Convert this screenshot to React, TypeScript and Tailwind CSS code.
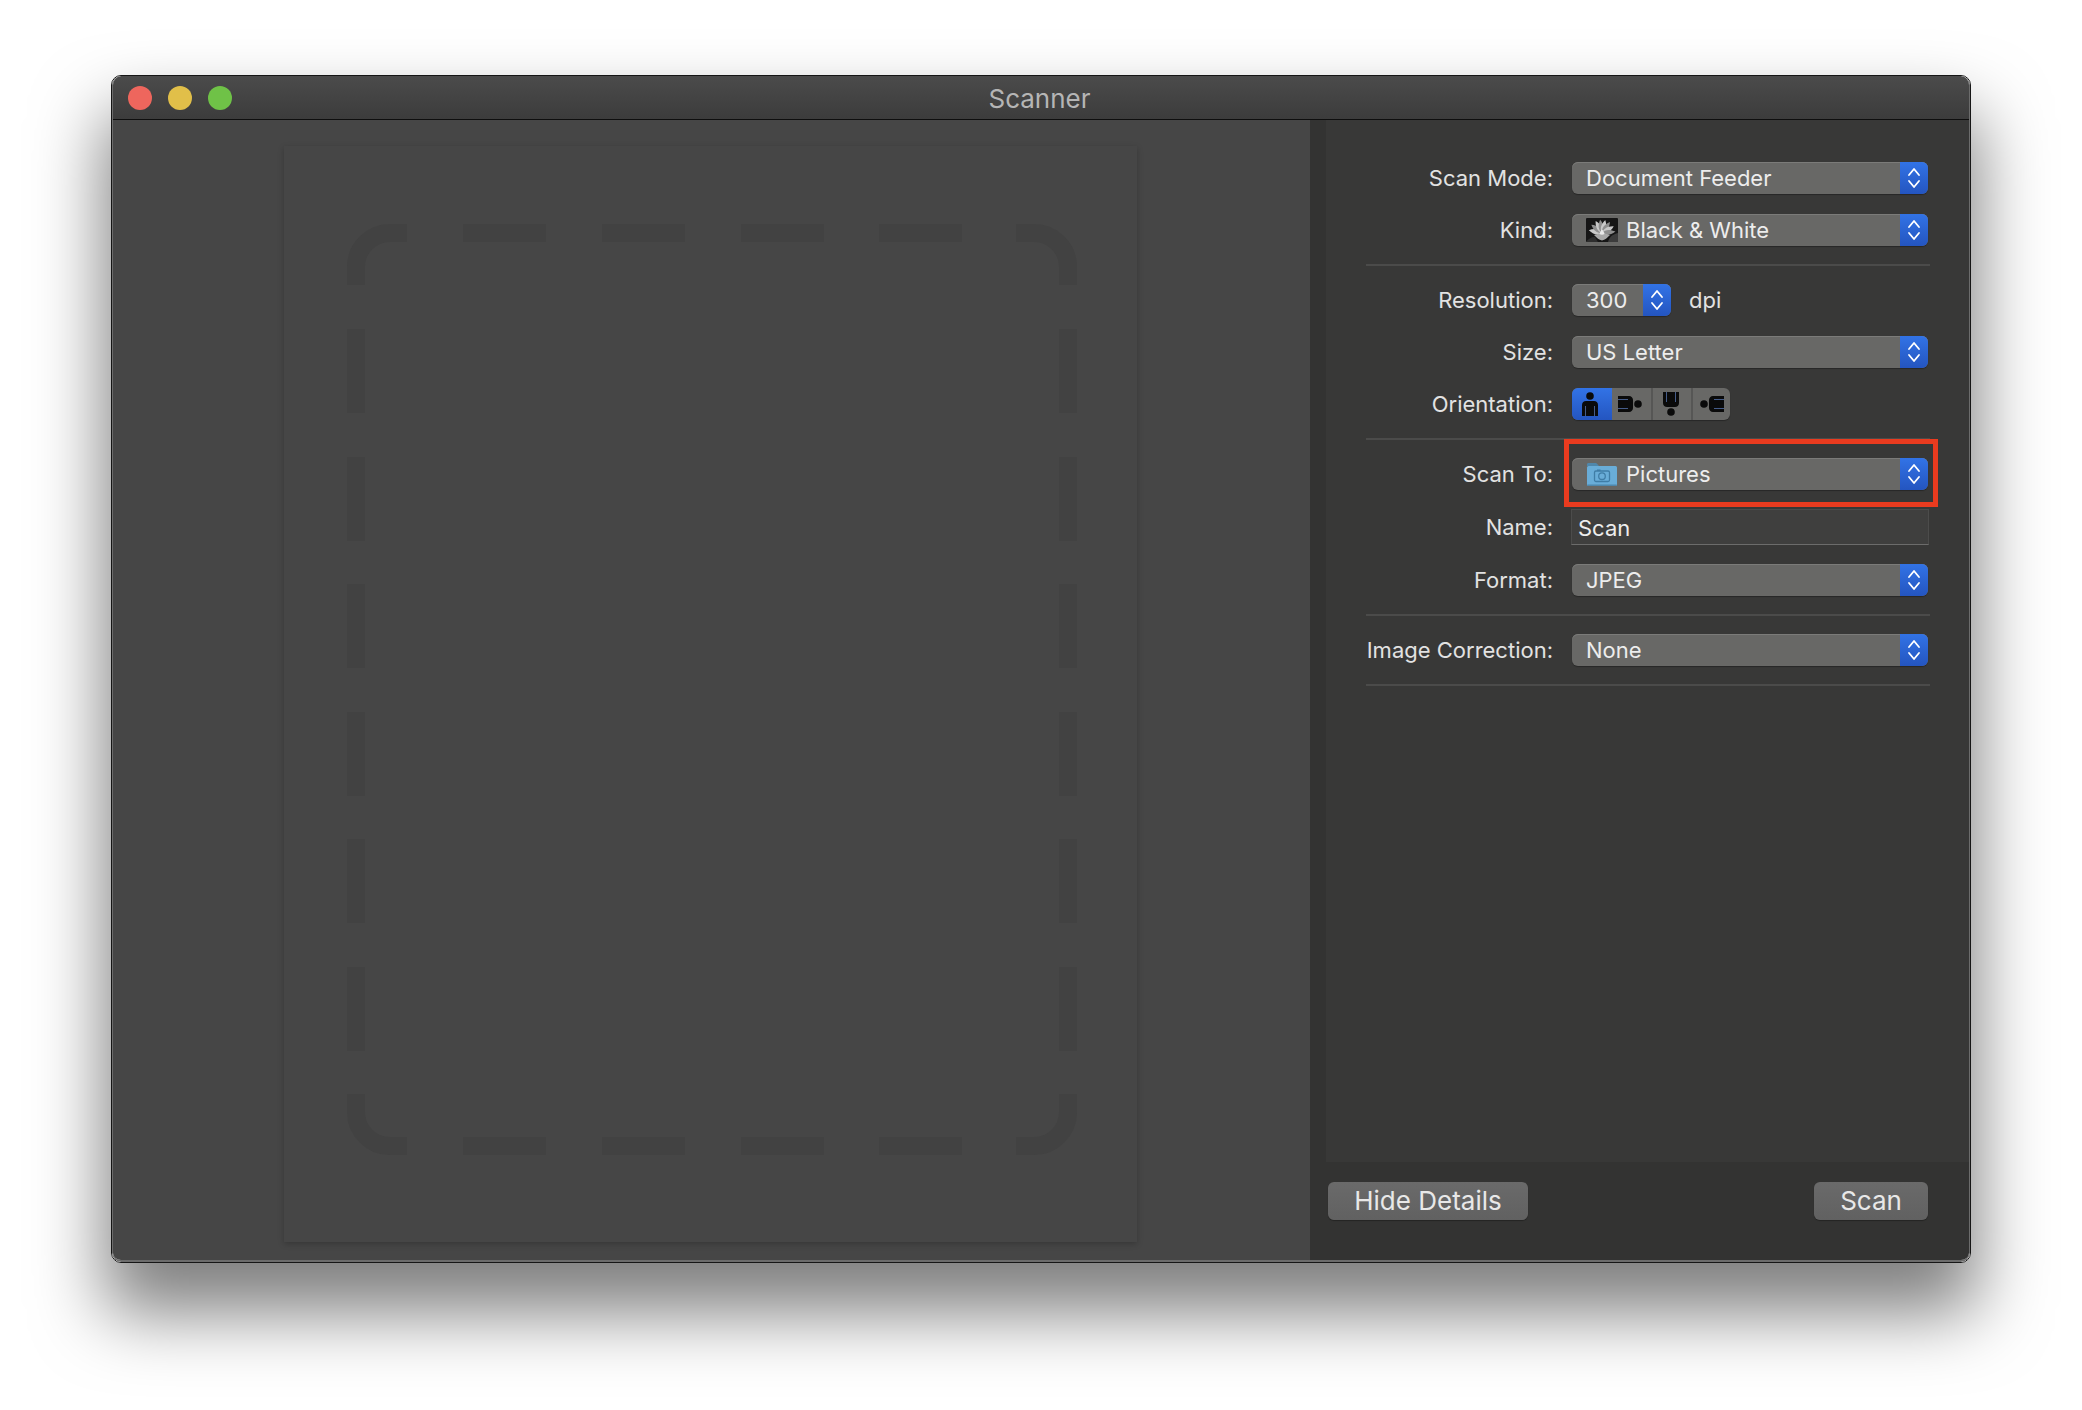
import type { ReactNode } from "react";

function Chevrons() {
  return (
    <svg width="14" height="24" viewBox="0 0 14 24" fill="none" stroke="#fff" strokeWidth="1.8" strokeLinecap="round" strokeLinejoin="round">
      <path d="M2 9 7 3l5 6" />
      <path d="M2 15l5 6 5-6" />
    </svg>
  );
}

function FlowerIcon() {
  const petals = [-78, -52, -28, -8, 14, 36, 60, 84];
  return (
    <svg width="32" height="24" viewBox="0 0 32 24" className="shrink-0">
      <rect width="32" height="24" rx="1" fill="#161616" />
      <path d="M22 24c1-5 5-8 10-9v9z" fill="#3c3c3c" />
      <path d="M0 24c2-3 5-5 9-5l3 5z" fill="#2e2e2e" />
      <g>
        {petals.map((a, i) => (
          <path
            key={a}
            d="M16 15c-3-3-3.500-8 0-13.500 3.500 5.500 3 10.500 0 13.500z"
            fill={i % 2 ? "#8f8f8f" : "#c9c9c9"}
            transform={`rotate(${a} 16 15)`}
          />
        ))}
      </g>
      <path d="M8 17c3 3 5 5 8 5.500 3-.5 5-2.500 8-5.500-3-1-5.500-2-8-2s-5 1-8 2z" fill="#a8a8a8" />
      <path d="M13.500 16c.5-2 1.500-3.500 2.500-4.500 1 1 2 2.500 2.500 4.500-1.500 1-3.500 1-5 0z" fill="#eaeaea" />
    </svg>
  );
}

function FolderIcon() {
  return (
    <svg width="32" height="26" viewBox="0 0 32 26" className="shrink-0">
      <path d="M1 3.500C1 2.500 1.700 2 2.500 2h7c.8 0 1.300.4 1.800 1L13 5H1z" fill="#4f87ab" />
      <rect x="1" y="5" width="30" height="20" rx="1.500" fill="#69add8" />
      <rect x="1" y="23.500" width="30" height="1.500" rx=".7" fill="#4f87ab" />
      <g fill="none" stroke="#3f7da6" strokeWidth="1.300">
        <rect x="8.500" y="10" width="15" height="10.500" rx="1.500" />
        <circle cx="16" cy="15.200" r="3.300" />
      </g>
      <rect x="11" y="8.500" width="3.500" height="1.500" fill="#3f7da6" />
    </svg>
  );
}

function PersonIcon({ className }: { className?: string }) {
  return (
    <svg width="18" height="24" viewBox="0 0 18 24" className={className}>
      <circle cx="9" cy="4" r="3.800" fill="#0a0a0a" />
      <path d="M1 24v-11c0-2.400 1.800-4 4-4h8c2.200 0 4 1.600 4 4v11z" fill="#0a0a0a" />
      <path d="M4.500 14v10M13.500 14v10" stroke="#5f7fc0" strokeWidth="1" opacity=".7" />
    </svg>
  );
}

function Popup({ children, icon }: { children: ReactNode; icon?: ReactNode }) {
  return (
    <div className="flex h-8 w-[356px] overflow-hidden rounded-[6px] bg-[#686866] shadow-[inset_0_1px_0_#7b7b79,0_1px_1px_rgba(0,0,0,0.3)]">
      <div className="flex flex-1 items-center gap-2 pl-[14px] text-[#ededed]">
        {icon}
        <span className="pt-px">{children}</span>
      </div>
      <div className="flex w-[28px] items-center justify-center bg-gradient-to-b from-[#3273e6] to-[#2455c0]">
        <Chevrons />
      </div>
    </div>
  );
}

function Row({ label, children }: { label: string; children: ReactNode }) {
  return (
    <div className="flex items-center gap-[19px]">
      <div className="w-[187px] whitespace-nowrap pt-px text-right text-[#e2e2e2]">{label}</div>
      {children}
    </div>
  );
}

function Divider() {
  return <div className="my-[18px] h-0.5 w-[564px] bg-[#4b4b4a]" />;
}

function Form() {
  return (
    <div className="flex flex-1 flex-col bg-[#383837] pl-10 pt-[42px] font-['Inter',sans-serif] text-[22px] leading-[31px]">
      <div className="flex flex-col gap-5">
        <Row label="Scan Mode:">
          <Popup>Document Feeder</Popup>
        </Row>
        <Row label="Kind:">
          <Popup icon={<FlowerIcon />}>Black &amp; White</Popup>
        </Row>
      </div>
      <Divider />
      <div className="flex flex-col gap-5">
        <Row label="Resolution:">
          <div className="flex items-center gap-[18px]">
            <div className="flex h-8 w-[99px] overflow-hidden rounded-[6px] bg-[#686866] shadow-[inset_0_1px_0_#7b7b79,0_1px_1px_rgba(0,0,0,0.3)]">
              <div className="flex-1 pl-[14px] pt-px text-[#ededed]">300</div>
              <div className="flex w-[28px] items-center justify-center bg-gradient-to-b from-[#3273e6] to-[#2455c0]">
                <Chevrons />
              </div>
            </div>
            <span className="pt-px text-[#e2e2e2]">dpi</span>
          </div>
        </Row>
        <Row label="Size:">
          <Popup>US Letter</Popup>
        </Row>
        <Row label="Orientation:">
          <div className="flex h-8 w-[158px] overflow-hidden rounded-[6px] bg-[#686866] shadow-[0_1px_1px_rgba(0,0,0,0.3)]">
            <div className="flex w-10 items-center justify-center bg-gradient-to-b from-[#3273e6] to-[#2455c0] pr-1">
              <PersonIcon />
            </div>
            <div className="flex w-[39px] items-center justify-center pr-[3px]">
              <PersonIcon className="rotate-90" />
            </div>
            <div className="flex w-10 items-center justify-center border-l-2 border-[#565655] pr-0.5">
              <PersonIcon className="rotate-180" />
            </div>
            <div className="flex flex-1 items-center justify-center border-l-2 border-[#565655]">
              <PersonIcon className="-rotate-90" />
            </div>
          </div>
        </Row>
      </div>
      <Divider />
      <div className="flex flex-col gap-[19px]">
        <Row label="Scan To:">
          <div className="relative">
            <Popup icon={<FolderIcon />}>Pictures</Popup>
            <div className="absolute -bottom-[17px] -left-2 -right-2.5 -top-[19px] border-[5px] border-[#ea3b1f]" />
          </div>
        </Row>
        <Row label="Name:">
          <div className="flex h-9 w-[358px] -translate-x-px items-center border border-[#4c4c4b] border-b-[#6c6c6b] bg-[#3f3f3e] pl-1.5 pt-0.5 text-[#ededed]">
            Scan
          </div>
        </Row>
        <Row label="Format:">
          <Popup>JPEG</Popup>
        </Row>
      </div>
      <Divider />
      <Row label="Image Correction:">
        <Popup>None</Popup>
      </Row>
      <Divider />
    </div>
  );
}

function Button({ children, width }: { children: ReactNode; width: string }) {
  return (
    <div className={`flex h-[38px] items-center justify-center rounded-[6px] bg-gradient-to-b from-[#6a6a6a] to-[#616161] pb-0.5 text-[26px] text-[#e8e8e8] shadow-[0_1px_1px_rgba(0,0,0,0.3)] ${width}`}>
      {children}
    </div>
  );
}

function Paper() {
  const top = [152, 291, 430, 568];
  const side = [105, 233, 360, 488, 615, 743];
  return (
    <div className="h-[1096px] w-[853px] bg-[#464646] pl-[63px] pt-[78px] shadow-[0_2px_6px_rgba(0,0,0,0.22)]">
      <svg width="730" height="931" viewBox="0 0 730 931" fill="none" stroke="#424242" strokeWidth="18">
        <path d="M9 61V43A34 34 0 0 1 43 9H60" />
        <path d="M721 61V43A34 34 0 0 0 687 9H669" />
        <path d="M9 870v18a34 34 0 0 0 34 34H60" />
        <path d="M721 870v18a34 34 0 0 1-34 34H669" />
        {top.map((x) => (
          <g key={x}>
            <path d={`M${x - 36} 9h83`} />
            <path d={`M${x - 36} 922h83`} />
          </g>
        ))}
        {side.map((y) => (
          <g key={y}>
            <path d={`M9 ${y}v84`} />
            <path d={`M721 ${y}v84`} />
          </g>
        ))}
      </svg>
    </div>
  );
}

export default function App() {
  return (
    <div className="h-[1410px] w-[2082px] overflow-hidden bg-white pl-[111px] pt-[75px] font-['Inter',sans-serif]">
      <div className="h-[1188px] w-[1860px] overflow-hidden rounded-[10px] border border-[#161616] shadow-[0_44px_70px_6px_rgba(0,0,0,0.5)]">
        <div className="flex h-full flex-col overflow-hidden rounded-[9px] border-x border-b-2 border-[#6c6c6c]">
          <div className="grid h-[44px] shrink-0 grid-cols-[1fr_auto_1fr] items-center border-b border-[#0e0e0e] bg-gradient-to-b from-[#4b4b4b] to-[#3c3c3c] pl-[15px] pr-[18px]">
            <div className="flex gap-4">
              <div className="size-6 rounded-full bg-[#ee665d]" />
              <div className="size-6 rounded-full bg-[#e1bf49]" />
              <div className="size-6 rounded-full bg-[#6fc247]" />
            </div>
            <div className="pt-0.5 text-[26px] text-[#b5b5b5]">Scanner</div>
          </div>
          <div className="flex min-h-0 flex-1">
            <div className="w-[1197px] bg-[#464646] pl-[171px] pt-[26px]">
              <Paper />
            </div>
            <div className="flex flex-1 flex-col bg-[#333332]">
              <div className="flex flex-1 pl-4">
                <Form />
              </div>
              <div className="flex h-[98px] shrink-0 justify-between pl-[18px] pr-[41px] pt-5">
                <Button width="w-[200px]">Hide Details</Button>
                <Button width="w-[114px]">Scan</Button>
              </div>
            </div>
          </div>
        </div>
      </div>
    </div>
  );
}
